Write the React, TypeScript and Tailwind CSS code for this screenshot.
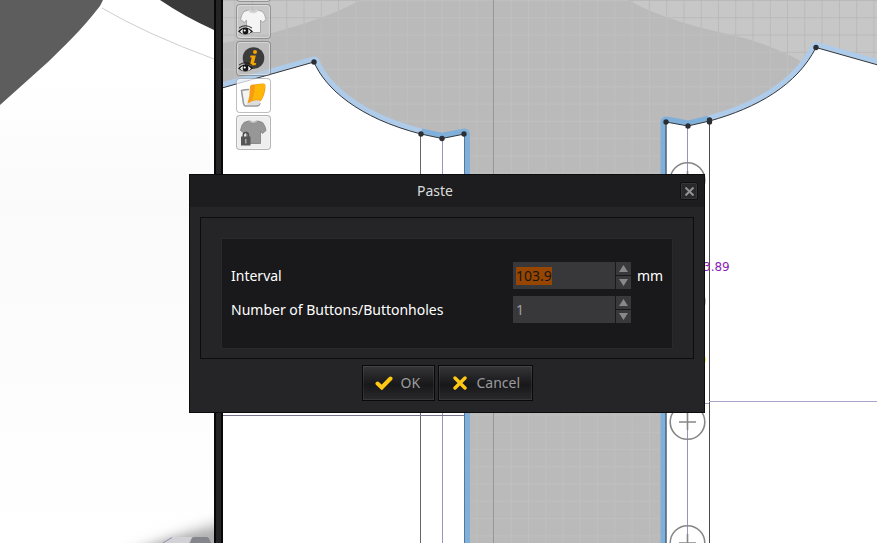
import { useEffect, useRef } from "react";
import type { ReactNode } from "react";

function GarmentView() {
  return (
    <svg
      className="block h-full w-full"
      viewBox="0 0 214 543"
      preserveAspectRatio="xMinYMin slice"
      role="img"
      aria-label="3D garment view"
    >
      <defs>
        <linearGradient id="cloth" x1="0" y1="0" x2="0" y2="1">
          <stop offset="0" stopColor="#ffffff" />
          <stop offset="0.15" stopColor="#ffffff" />
          <stop offset="0.38" stopColor="#fafafa" />
          <stop offset="0.75" stopColor="#fdfdfd" />
          <stop offset="1" stopColor="#ffffff" />
        </linearGradient>
        <filter id="soft" x="-50%" y="-100%" width="200%" height="300%">
          <feGaussianBlur stdDeviation="7" />
        </filter>
        <filter id="softer" x="-50%" y="-100%" width="200%" height="300%">
          <feGaussianBlur stdDeviation="4" />
        </filter>
      </defs>
      <rect width="214" height="543" fill="url(#cloth)" />
      <path d="M0 0H103L100 6C80 32 62 48 48 62C32 76 16 91 0 105Z" fill="#5d5d5d" />
      <path d="M160 0H214V30C194 21 176 11 160 0Z" fill="#39393a" />
      <path d="M102 8Q146 34 214 59" fill="none" stroke="#cecece" strokeWidth="1" />
      <path d="M110 562Q160 540 235 519V562Z" fill="#b4b4b4" filter="url(#soft)" />
      <path d="M145 550Q180 536 225 532V560H140Z" fill="#b0b0b0" filter="url(#softer)" />
      <path d="M163 543L172 537H192L189 543Z" fill="#d2d2d6" />
      <path d="M163 543L172 537.500" stroke="#8c8cb8" />
      <path d="M190 543L192 538Q193 537 195 537H207Q209 537 211 543Z" fill="#85858c" />
    </svg>
  );
}

function ButtonMark({ y }: { y: number }) {
  return (
    <g fill="none" stroke="#868686">
      <circle cx="687.5" cy={y} r="17.3" strokeWidth="1.6" />
      <path d={`M679 ${y}h17M687.5 ${y - 9}v17`} strokeWidth="1.6" />
    </g>
  );
}

const nodes = [
  [314, 62], [421, 134], [442, 138.5], [464, 134],
  [666, 122], [688, 126], [709.5, 122], [709.5, 120], [816, 47.5],
];

const bodyPath =
  "M223 43Q250 38 272 33Q325 19 361 0H628Q664 20 723 33Q775 44 812 68L877 120V543H223Z";

function PatternView() {
  return (
    <svg
      className="block h-full w-full"
      viewBox="223 0 654 543"
      preserveAspectRatio="xMinYMin slice"
      role="img"
      aria-label="2D pattern view"
    >
      <defs>
        <pattern id="grid" x="493.5" y="0" width="17.27" height="17.27" patternUnits="userSpaceOnUse">
          <path d="M0 0V17.27M0 0H17.27" stroke="#000000" strokeOpacity="0.09" strokeWidth="1.4" />
        </pattern>
        <pattern id="bodyGrid" x="493.5" y="0" width="17.27" height="17.27" patternUnits="userSpaceOnUse">
          <path d="M0 0V17.27M0 0H17.27" stroke="#ffffff" strokeOpacity="0.1" strokeWidth="1.4" />
        </pattern>
      </defs>
      <rect x="223" width="654" height="543" fill="#c7c7c7" />
      <rect x="223" width="654" height="543" fill="url(#grid)" />
      <path d={bodyPath} fill="#bababa" />
      <path d={bodyPath} fill="url(#bodyGrid)" />
      <path d="M493.5 0V543" stroke="#969696" />

      <g fill="none" strokeWidth="11" strokeLinejoin="round">
        <path d="M215 90L314 62C325 88 358 118 421 134" stroke="#aecbea" />
        <path d="M421 134L442 138.5L464.500 134V550" stroke="#80b0da" />
        <path d="M709 121C757 108 797 85 816 47.500L885 67" stroke="#aecbea" />
        <path d="M709 121L688 126L666 122V550" stroke="#80b0da" />
      </g>

      <path d="M215 90L314 62C325 88 358 118 421 134L442 138.500L464.500 134V550H215Z" fill="#ffffff" stroke="#33363a" />
      <path d="M885 67L816 47.500C797 85 757 108 709.500 121L688 126L666 122V550H885Z" fill="#ffffff" stroke="#33363a" />
      <path d="M464.500 134V543M666 122V543" stroke="#56789a" />
      <path d="M420.500 134V543" stroke="#66666c" />
      <path d="M709.500 121V543" stroke="#4c4c50" />
      <path d="M442.500 138V543M687.500 126V543" stroke="#9a95b8" />
      <path d="M223 415.500H464" stroke="#77718f" />
      <path d="M709 401.500H877M700 403.500H709" stroke="#a8a3c8" />
      <ButtonMark y={180} />
      <ButtonMark y={301} />
      <ButtonMark y={422} />
      <ButtonMark y={543} />
      <circle cx="702" cy="359.500" r="4" fill="#f3f03a" />
      <text x="703" y="271" className="font-['DejaVu_Sans',sans-serif] text-[12px]" fill="#8a1fb8">3.89</text>
      {nodes.map(([x, y]) => (
        <circle key={`${x}-${y}`} cx={x} cy={y} r="2.7" fill="#2b2f33" />
      ))}
    </svg>
  );
}

const shirtPath =
  "M11.500 5L7 6.500Q4.500 9 3.500 14.500L7.500 17.500L9.500 15V27.500H23.500V15L25.500 17.500L29 14.500Q28 9 25.500 6.500L21 5Q16.300 9.500 11.500 5Z";

function Eye() {
  return (
    <g>
      <path d="M1 26.500Q8 18.500 16 26.500Q8 32.500 1 26.500Z" fill="#151515" />
      <path d="M3 26.500Q4.500 24.500 6 24Q5 27 6.500 29Q4.500 28.500 3 26.500ZM11 24Q12.500 24.500 14 26.500Q12.500 28.500 10.500 29Q12 27 11 24Z" fill="#f2f2f2" />
      <circle cx="7.700" cy="25.500" r="1.100" fill="#ffffff" />
      <path d="M2 23Q8 18.500 15 23" fill="none" stroke="#151515" strokeWidth="0.900" />
    </g>
  );
}

function ToolButton({ label, children }: { label: string; children?: ReactNode }) {
  return (
    <button
      type="button"
      aria-label={label}
      className="size-[35px] rounded-sm border border-black/25 bg-[#c8c8c8]/30 shadow-[inset_0_0_0_1px_rgba(255,255,255,0.35)] aria-pressed:bg-white/70"
      aria-pressed={label === "Show fabric"}
    >
      <svg className="block size-[33px]" viewBox="0 0 33 33" aria-hidden="true">
        {children}
      </svg>
    </button>
  );
}

function ViewTools() {
  return (
    <div className="absolute -top-[33px] left-[13px] flex flex-col gap-[2px]">
      <ToolButton label="View mode" />
      <ToolButton label="Show garment">
        <path d={shirtPath} fill="#f4f4f4" stroke="#a2a2a2" strokeWidth="0.900" strokeLinejoin="round" />
        <path d="M11.500 5Q16.300 9.500 21 5" fill="none" stroke="#d4d4d4" strokeWidth="2" />
        <Eye />
      </ToolButton>
      <ToolButton label="Show information">
        <circle cx="16.500" cy="16" r="10.800" fill="#3c3c3c" />
        <circle cx="18" cy="10" r="2" fill="#f7a600" />
        <path d="M13.500 13.500H18.800L17 21H19.300L18.500 23.300H12.800L14.700 15.500H13Z" fill="#f7a600" />
        <Eye />
      </ToolButton>
      <ToolButton label="Show fabric">
        <path d="M12 10.500Q8 10.500 4.500 11.500L6.500 24.500Q7 27.500 10 27L20 27Q22.500 26.500 23 24" fill="#f3f3f3" stroke="#999999" strokeWidth="1.600" strokeLinejoin="round" />
        <path d="M11 23Q18 20 23.500 22Q23 26 20.500 26H10Z" fill="#dddddd" />
        <path d="M13 7.500Q13.500 5.500 16 5.500L25 4.500Q28.500 4 28.500 7Q28.500 15 24 22Q17 19.500 10.500 24.500Q13 17 13 7.500Z" fill="#f59b14" />
        <path d="M18 6L26 5Q28 5 28 7Q27.500 14.500 23.800 21Q19.500 19.500 15 21.500Q18 14 18 6Z" fill="#ffb807" />
      </ToolButton>
      <ToolButton label="Lock garment">
        <path d={shirtPath} fill="#979797" stroke="#858585" strokeWidth="0.900" strokeLinejoin="round" />
        <path d="M12.500 4.500Q16.300 8 20 4.500" fill="none" stroke="#bcbcbc" strokeWidth="1.500" />
        <path d="M6.300 21V19Q6.300 16.500 8.800 16.500Q11.300 16.500 11.300 19V21" fill="none" stroke="#505050" strokeWidth="1.600" />
        <rect x="4" y="20.500" width="9.500" height="9" fill="#555555" />
        <path d="M8.800 23V27.500" stroke="#a8a8a8" strokeWidth="1.500" />
      </ToolButton>
    </div>
  );
}

function StepButton({ label, up, disabled }: { label: string; up?: boolean; disabled?: boolean }) {
  return (
    <button
      type="button"
      aria-label={label}
      disabled={disabled}
      className="flex flex-1 items-center justify-center bg-[#39393b]"
    >
      <svg className="block h-[7px] w-[9px]" viewBox="0 0 9 7" aria-hidden="true">
        <path d={up ? "M0 7L4.500 0L9 7Z" : "M0 0L4.500 7L9 0Z"} fill="#88888a" />
      </svg>
    </button>
  );
}

function NumberField({ id, value, selected, disabled }: { id: string; value: string; selected?: boolean; disabled?: boolean }) {
  const field = useRef<HTMLInputElement>(null);
  useEffect(() => {
    if (selected) {
      field.current?.focus();
      field.current?.select();
    }
  }, [selected]);

  return (
    <div className="flex h-[27px] gap-px">
      <input
        id={id}
        ref={field}
        type="text"
        inputMode="decimal"
        defaultValue={value}
        disabled={disabled}
        className="min-w-0 flex-1 bg-[#38383a] px-[3px] pt-px leading-[18px] text-[#a0a0a0] outline-none selection:bg-[#964600] selection:text-[#161616]"
      />
      <div className="flex w-[15px] flex-col gap-px">
        <StepButton label="Increase" up disabled={disabled} />
        <StepButton label="Decrease" disabled={disabled} />
      </div>
    </div>
  );
}

const actionClass =
  "flex h-9 items-center border border-[#09090a] bg-linear-to-b from-[#363638] from-0% via-[#18181a] via-55% to-[#29292b] to-100% text-[#9b9b9d] shadow-[inset_0_0_0_1px_rgba(255,255,255,0.07)]";

function PasteDialog() {
  return (
    <section
      role="dialog"
      aria-labelledby="paste-title"
      className="absolute top-[174px] left-[189px] w-[516px] border border-[#0c0c0d] bg-[#252527] text-[14px] leading-5"
    >
      <header className="flex h-8 items-center bg-[#1d1d1f] pr-[6px]">
        <h1 id="paste-title" className="flex-1 text-center text-[#dcdcdc]">Paste</h1>
        <button
          type="button"
          aria-label="Close"
          className="flex size-[18px] items-center justify-center rounded-xs border border-[#101011] bg-[#29292b] shadow-[inset_0_0_0_1px_rgba(255,255,255,0.06)]"
        >
          <svg className="block size-[9px]" viewBox="0 0 9 9" aria-hidden="true">
            <path d="M0.500 0.500L8.500 8.500M8.500 0.500L0.500 8.500" stroke="#929294" strokeWidth="2" />
          </svg>
        </button>
      </header>
      <form className="px-[10px] pt-[10px] pb-[11px]" onSubmit={(event) => event.preventDefault()}>
        <div className="border border-[#0c0c0d] px-5 pt-5 pb-[9px]">
          <div className="grid grid-cols-[1fr_118px_26px] items-center gap-x-[6px] gap-y-[7px] border border-[#29292b] bg-[#19191b] px-[9px] pt-[23px] pb-[25px] text-white">
            <label htmlFor="interval">Interval</label>
            <NumberField id="interval" value="103.9" selected />
            <span>mm</span>
            <label htmlFor="count">Number of Buttons/Buttonholes</label>
            <NumberField id="count" value="1" disabled />
          </div>
        </div>
        <div className="mt-[6px] flex justify-center gap-[3px]">
          <button type="submit" className={`${actionClass} w-[73px] gap-2 pl-3`}>
            <svg className="block h-[14px] w-[18px]" viewBox="0 0 18 14" aria-hidden="true">
              <path d="M2.500 7.500L6.800 11.500L15.500 2.500" fill="none" stroke="#ffc814" strokeWidth="4" strokeLinecap="round" />
            </svg>
            OK
          </button>
          <button type="button" className={`${actionClass} w-[95px] gap-[10px] pl-[14px]`}>
            <svg className="block size-[14px]" viewBox="0 0 14 14" aria-hidden="true">
              <path d="M2 2L12 12M12 2L2 12" fill="none" stroke="#ffc814" strokeWidth="3.400" strokeLinecap="round" />
            </svg>
            Cancel
          </button>
        </div>
      </form>
    </section>
  );
}

export default function App() {
  return (
    <main className="relative flex h-screen overflow-hidden bg-white font-['Noto_Sans','Open_Sans',sans-serif]">
      <div className="w-[214px] shrink-0">
        <GarmentView />
      </div>
      <div className="w-[9px] shrink-0 border-x-2 border-[#080809] bg-[#242426]" />
      <div className="relative min-w-0 flex-1">
        <PatternView />
        <ViewTools />
      </div>
      <PasteDialog />
    </main>
  );
}
